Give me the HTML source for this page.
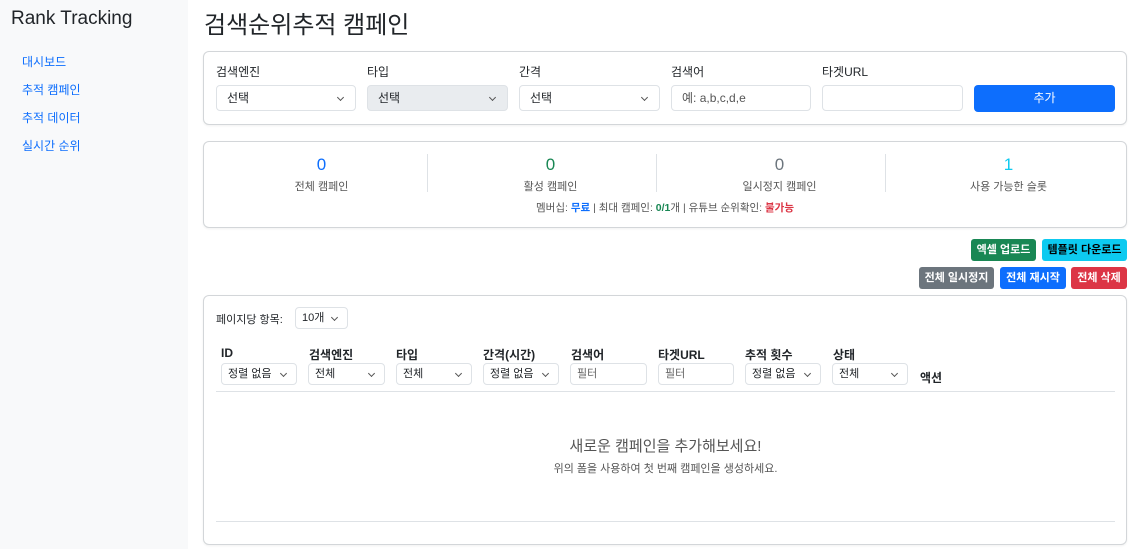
<!DOCTYPE html>
<html><head><meta charset="utf-8"><style>
*{box-sizing:border-box;margin:0;padding:0}
body{width:1136px;height:549px;overflow:hidden;background:#fff;font-family:"Liberation Sans","Noto Sans CJK KR",sans-serif;color:#212529;position:relative}
.a{position:absolute}
.side{left:0;top:0;width:188px;height:549px;background:#f8f9fa}
.nav{left:22px;font-size:12px;color:#0d6efd}
.card{position:absolute;border:1px solid #d3d6d9;border-radius:6px;background:#fff;box-shadow:0 1px 2px rgba(0,0,0,.06)}
.lbl{font-size:12px;color:#212529}
.inp{position:absolute;height:26px;border:1px solid #dee2e6;border-radius:4px;background:#fff;font-size:12px;padding:0 10px;line-height:24px}
.inp.s::after{content:"";position:absolute;right:12px;top:9px;width:4px;height:4px;border-right:1px solid #555;border-bottom:1px solid #555;transform:rotate(45deg)}
.sm{height:22px;line-height:20px;font-size:11px;padding:0 6px}
.sm.s::after{top:7px;right:10px}
.btn{position:absolute;height:22px;line-height:22px;font-size:11px;font-weight:bold;color:#fff;border-radius:3px;text-align:center}
.num{font-size:17px;text-align:center;width:229px}
.cap{font-size:11px;color:#555;text-align:center;width:229px}
.th{font-size:12px;font-weight:bold}
</style></head><body>
<div class="a side"></div>
<div class="a" style="left:11px;top:8px;font-size:19px;color:#212529">Rank Tracking</div>
<div class="a nav" style="top:53px">대시보드</div>
<div class="a nav" style="top:81px">추적 캠페인</div>
<div class="a nav" style="top:109px">추적 데이터</div>
<div class="a nav" style="top:137px">실시간 순위</div>
<div class="a" style="left:204px;top:5px;font-size:24px;color:#212529">검색순위추적 캠페인</div>

<div class="card" style="left:203px;top:51px;width:924px;height:74px"></div>
<div class="a lbl" style="left:216px;top:63px">검색엔진</div>
<div class="a lbl" style="left:367px;top:63px">타입</div>
<div class="a lbl" style="left:519px;top:63px">간격</div>
<div class="a lbl" style="left:671px;top:63px">검색어</div>
<div class="a lbl" style="left:822px;top:63px">타겟URL</div>
<div class="inp s" style="left:216px;top:85px;width:140px">선택</div>
<div class="inp s" style="left:367px;top:85px;width:141px;background:#e9ecef">선택</div>
<div class="inp s" style="left:519px;top:85px;width:141px">선택</div>
<div class="inp" style="left:671px;top:85px;width:140px;color:#555">예: a,b,c,d,e</div>
<div class="inp" style="left:822px;top:85px;width:141px"></div>
<div class="btn" style="left:974px;top:85px;width:141px;height:27px;line-height:27px;background:#0d6efd;font-weight:normal;font-size:12px;border-radius:4px">추가</div>

<div class="card" style="left:203px;top:141px;width:924px;height:87px"></div>
<div class="a num" style="left:207px;top:155px;color:#0d6efd">0</div>
<div class="a num" style="left:436px;top:155px;color:#198754">0</div>
<div class="a num" style="left:665px;top:155px;color:#6c757d">0</div>
<div class="a num" style="left:894px;top:155px;color:#0dcaf0">1</div>
<div class="a cap" style="left:207px;top:178px">전체 캠페인</div>
<div class="a cap" style="left:436px;top:178px">활성 캠페인</div>
<div class="a cap" style="left:665px;top:178px">일시정지 캠페인</div>
<div class="a cap" style="left:894px;top:178px">사용 가능한 슬롯</div>
<div class="a" style="left:427px;top:154px;width:1px;height:38px;background:#dee2e6"></div>
<div class="a" style="left:656px;top:154px;width:1px;height:38px;background:#dee2e6"></div>
<div class="a" style="left:885px;top:154px;width:1px;height:38px;background:#dee2e6"></div>
<div class="a" style="left:203px;top:200px;width:924px;text-align:center;font-size:10.5px;color:#555">멤버십: <b style="color:#0d6efd">무료</b> | 최대 캠페인: <b style="color:#198754">0/1</b>개 | 유튜브 순위확인: <b style="color:#dc3545">불가능</b></div>

<div class="btn" style="left:971px;top:239px;width:65px;background:#198754">엑셀 업로드</div>
<div class="btn" style="left:1042px;top:239px;width:85px;background:#0dcaf0;color:#000">템플릿 다운로드</div>
<div class="btn" style="left:919px;top:267px;width:75px;background:#6c757d">전체 일시정지</div>
<div class="btn" style="left:1000px;top:267px;width:66px;background:#0d6efd">전체 재시작</div>
<div class="btn" style="left:1071px;top:267px;width:56px;background:#dc3545">전체 삭제</div>

<div class="card" style="left:203px;top:295px;width:924px;height:250px"></div>
<div class="a" style="left:216px;top:311px;font-size:11px">페이지당 항목:</div>
<div class="inp s sm" style="left:295px;top:307px;width:53px">10개</div>
<div class="a th" style="left:221px;top:346px">ID</div>
<div class="a th" style="left:309px;top:346px">검색엔진</div>
<div class="a th" style="left:396px;top:346px">타입</div>
<div class="a th" style="left:483px;top:346px">간격(시간)</div>
<div class="a th" style="left:571px;top:346px">검색어</div>
<div class="a th" style="left:658px;top:346px">타겟URL</div>
<div class="a th" style="left:745px;top:346px">추적 횟수</div>
<div class="a th" style="left:833px;top:346px">상태</div>
<div class="inp s sm" style="left:221px;top:363px;width:76px">정렬 없음</div>
<div class="inp s sm" style="left:308px;top:363px;width:77px">전체</div>
<div class="inp s sm" style="left:396px;top:363px;width:76px">전체</div>
<div class="inp s sm" style="left:483px;top:363px;width:76px">정렬 없음</div>
<div class="inp sm" style="left:570px;top:363px;width:77px;color:#666">필터</div>
<div class="inp sm" style="left:658px;top:363px;width:76px;color:#666">필터</div>
<div class="inp s sm" style="left:745px;top:363px;width:76px">정렬 없음</div>
<div class="inp s sm" style="left:832px;top:363px;width:76px">전체</div>
<div class="a th" style="left:920px;top:369px">액션</div>
<div class="a" style="left:216px;top:391px;width:899px;height:1px;background:#dee2e6"></div>
<div class="a" style="left:216px;top:435px;width:899px;text-align:center;font-size:15px;color:#555">새로운 캠페인을 추가해보세요!</div>
<div class="a" style="left:216px;top:460px;width:899px;text-align:center;font-size:11px;color:#555">위의 폼을 사용하여 첫 번째 캠페인을 생성하세요.</div>
<div class="a" style="left:216px;top:521px;width:899px;height:1px;background:#dee2e6"></div>
</body></html>
